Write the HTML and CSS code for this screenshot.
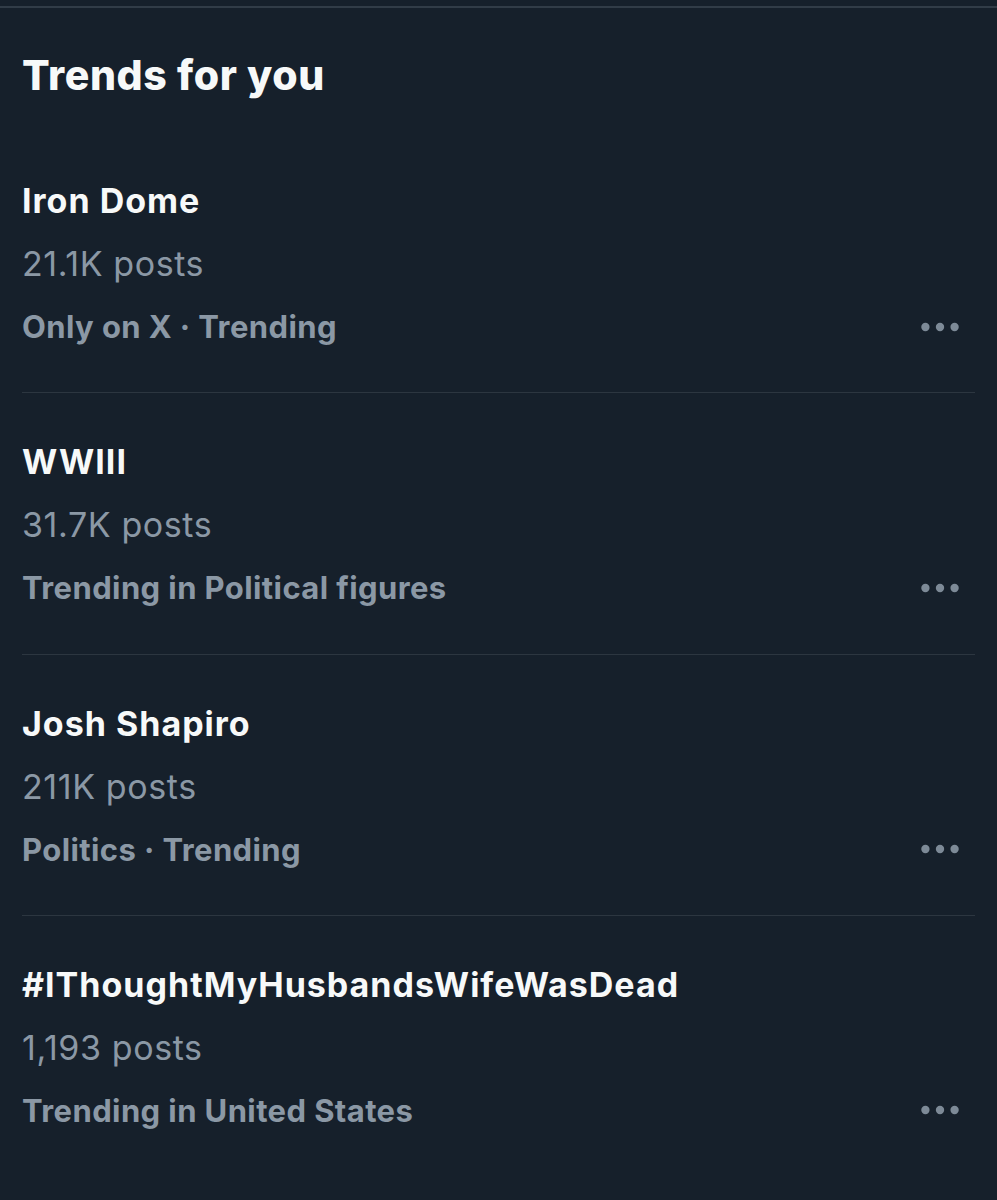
FILE: index.html
```html
<!DOCTYPE html>
<html lang="en">
<head>
<meta charset="utf-8">
<title>Trends for you</title>
<link rel="stylesheet" href="styles.css">
</head>
<body>
<div class="topbar"></div>
<section class="panel">
  <h1 class="title">Trends for you</h1>
  <div class="trend">
    <div class="name">Iron Dome</div>
    <div class="count">21.1K posts</div>
    <div class="meta-row">
      <span class="meta">Only on X · Trending</span>
      <svg class="more" viewBox="0 0 24 24" aria-hidden="true"><circle cx="5" cy="12" r="2"/><circle cx="12" cy="12" r="2"/><circle cx="19" cy="12" r="2"/></svg>
    </div>
  </div>
  <div class="trend">
    <div class="name">WWIII</div>
    <div class="count">31.7K posts</div>
    <div class="meta-row">
      <span class="meta">Trending in Political figures</span>
      <svg class="more" viewBox="0 0 24 24" aria-hidden="true"><circle cx="5" cy="12" r="2"/><circle cx="12" cy="12" r="2"/><circle cx="19" cy="12" r="2"/></svg>
    </div>
  </div>
  <div class="trend">
    <div class="name">Josh Shapiro</div>
    <div class="count">211K posts</div>
    <div class="meta-row">
      <span class="meta">Politics · Trending</span>
      <svg class="more" viewBox="0 0 24 24" aria-hidden="true"><circle cx="5" cy="12" r="2"/><circle cx="12" cy="12" r="2"/><circle cx="19" cy="12" r="2"/></svg>
    </div>
  </div>
  <div class="trend last">
    <div class="name">#IThoughtMyHusbandsWifeWasDead</div>
    <div class="count">1,193 posts</div>
    <div class="meta-row">
      <span class="meta">Trending in United States</span>
      <svg class="more" viewBox="0 0 24 24" aria-hidden="true"><circle cx="5" cy="12" r="2"/><circle cx="12" cy="12" r="2"/><circle cx="19" cy="12" r="2"/></svg>
    </div>
  </div>
</section>
</body>
</html>
```

FILE: styles.css
```css
html, body {
  margin: 0;
  padding: 0;
  background: #16202b;
  height: 100%;
}
body {
  font-family: Inter, "Liberation Sans", sans-serif;
  color: #eef1f3;
  overflow: hidden;
}
.topbar {
  height: 6px;
  border-bottom: 2px solid #313c47;
}
.panel {
  padding: 42px 22px 0 22px;
}
.title {
  margin: 0;
  font-size: 41px;
  line-height: 50px;
  font-weight: 800;
  letter-spacing: 0.6px;
  color: #f7f9f9;
}
.trend {
  padding: 37px 0 34.3px 0;
  border-bottom: 1px solid #2c3640;
}
.trend:first-of-type {
  padding-top: 69px;
}
.trend.last {
  border-bottom: none;
}
.name {
  font-size: 34px;
  line-height: 63px;
  font-weight: 700;
  letter-spacing: 1px;
  color: #f7f9f9;
}
.count {
  font-size: 34px;
  line-height: 63px;
  font-weight: 400;
  letter-spacing: 0.6px;
  color: #8b98a5;
}
.meta-row {
  display: flex;
  align-items: center;
  justify-content: space-between;
  height: 63px;
}
.meta {
  font-size: 31px;
  font-weight: 700;
  letter-spacing: 0.4px;
  color: #8b98a5;
}
.more {
  width: 50px;
  height: 50px;
  margin-right: 10px;
  fill: #7d8a97;
}
```
